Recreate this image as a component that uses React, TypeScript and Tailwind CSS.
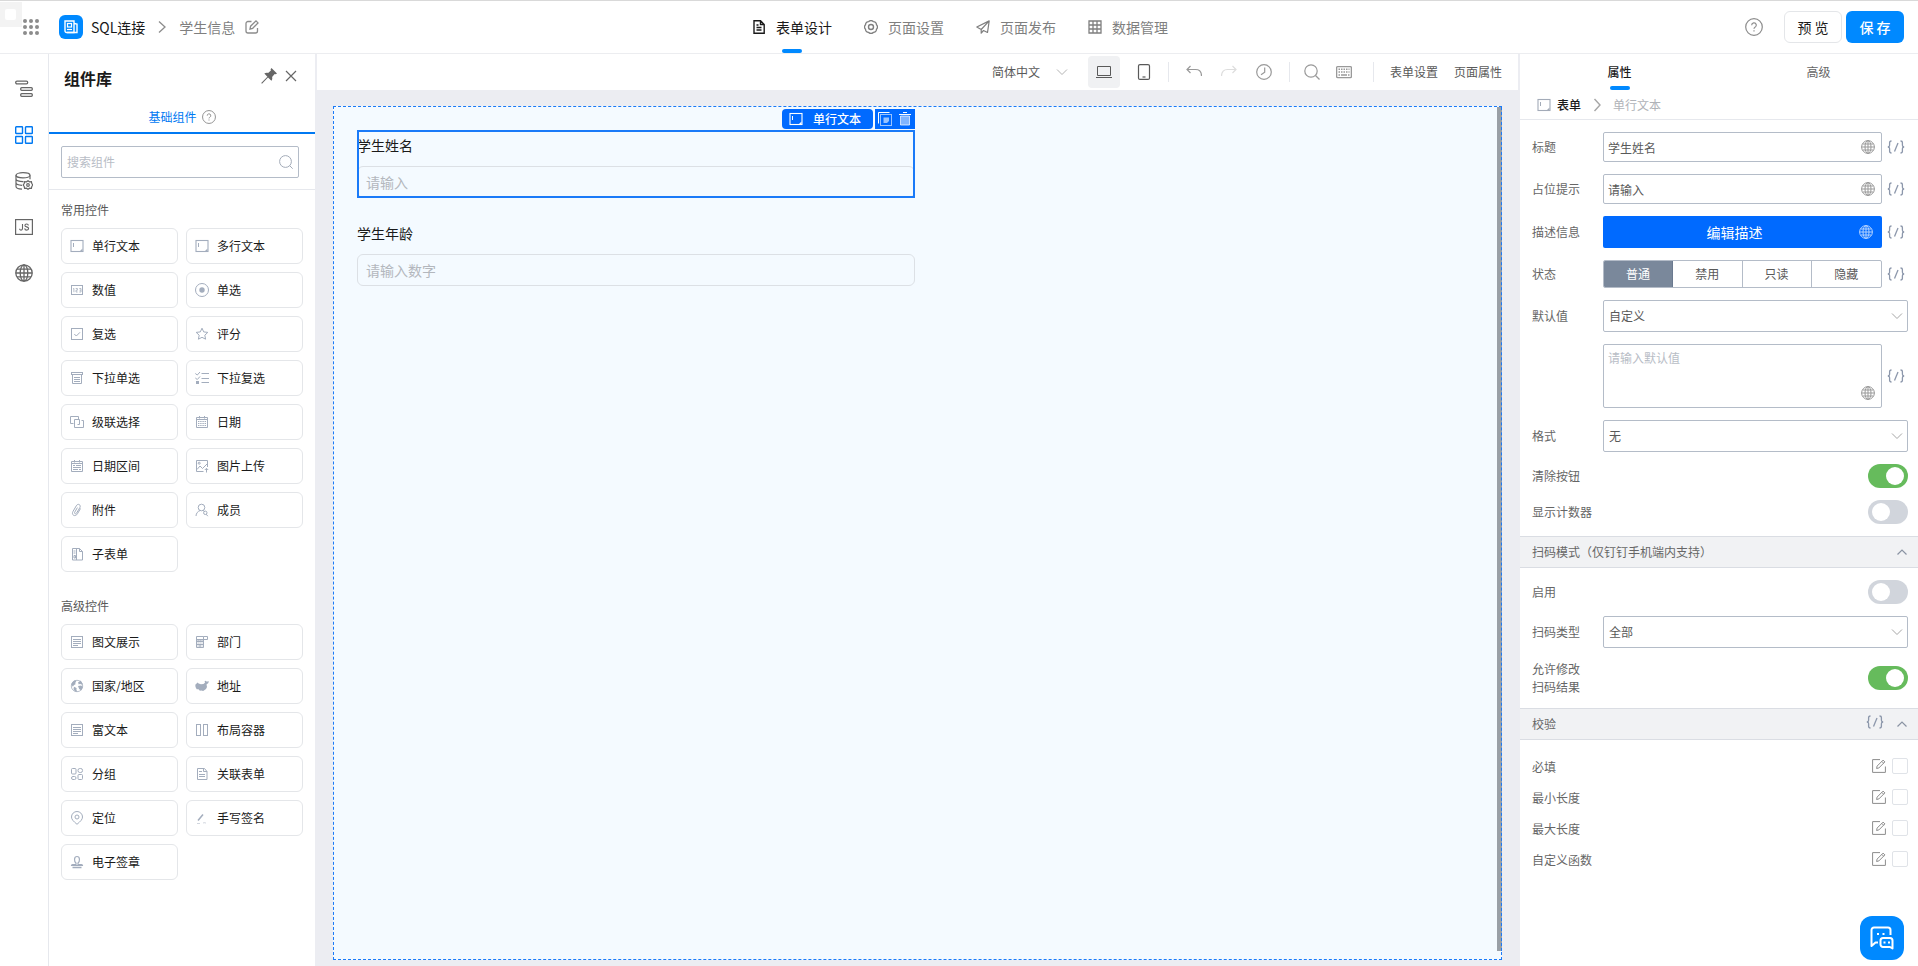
import { useState } from 'react';
import type { ReactNode } from 'react';

interface IconProps {
  size?: number;
  className?: string;
  children: ReactNode;
}

function Icon({ size = 14, className, children }: IconProps) {
  return (
    <svg
      width={size}
      height={size}
      viewBox={`0 0 ${size} ${size}`}
      fill="none"
      stroke="currentColor"
      strokeWidth="1"
      aria-hidden="true"
      className={`shrink-0 ${className ?? ''}`}
    >
      {children}
    </svg>
  );
}

const GlobeIcon = ({ className }: { className?: string }) => (
  <Icon className={className}>
    <circle cx="7" cy="7" r="6.4" />
    <ellipse cx="7" cy="7" rx="3" ry="6.4" />
    <path d="M7 .6v12.8M.6 7h12.8M1.6 4h10.8M1.6 10h10.8" />
  </Icon>
);

const ChevronDown = ({ className }: { className?: string }) => (
  <Icon size={12} className={className}>
    <path d="M1 3.5l5 5 5-5" />
  </Icon>
);

const ChevronUp = () => (
  <Icon size={12} className="text-[#8a93a3]">
    <path d="M1.5 8.5L6 4l4.5 4.5" strokeWidth="1.2" />
  </Icon>
);

const BracesIcon = () => (
  <svg width="18" height="14" viewBox="0 0 18 14" fill="none" stroke="currentColor" strokeWidth="1.3" aria-hidden="true">
    <path d="M4.5 1C3 1 2.6 1.6 2.6 2.8v2.4C2.6 6.4 2.2 7 .8 7c1.4 0 1.8.6 1.8 1.8v2.4c0 1.2.4 1.8 1.9 1.8" />
    <path d="M11 3L7.5 11.500" />
    <path d="M13.5 1c1.5 0 1.9.6 1.9 1.8v2.4c0 1.2.4 1.8 1.8 1.8-1.4 0-1.8.6-1.8 1.8v2.4c0 1.2-.4 1.8-1.9 1.8" />
  </svg>
);

const TextBoxIcon = ({ className }: { className?: string }) => (
  <Icon className={className}>
    <rect x="1" y="1.5" width="12" height="11" strokeWidth="1.1" />
    <path d="M3.5 4v4" />
    <path d="M12.500 9.500v2.500H10z" fill="currentColor" stroke="none" />
  </Icon>
);

const HelpIcon = ({ size = 14, className }: { size?: number; className?: string }) => (
  <svg
    width={size}
    height={size}
    viewBox="0 0 18 18"
    fill="none"
    stroke="currentColor"
    strokeWidth="1.2"
    aria-hidden="true"
    className={className}
  >
    <circle cx="9" cy="9" r="8.3" />
    <path d="M6.7 7.3a2.3 2.3 0 1 1 3.3 2c-.7.4-1 .8-1 1.5M9 12.2v1.3" />
  </svg>
);

const EditSquareIcon = () => (
  <Icon className="text-[#8c8c8c]">
    <path d="M8 .6H.6v12.8h12.8V7.5" />
    <path d="M4.6 9.5l.5-2.4 6-6 1.8 1.8-6 6zM9.8 2.4l1.8 1.8" />
  </Icon>
);

const ArticleIcon = () => (
  <Icon>
    <rect x="1.5" y="1.5" width="11" height="11" />
    <path d="M3 4.5h8M3 6.5h8M3 8.5h8M3 10.5h5" />
  </Icon>
);

interface PaletteItem {
  label: string;
  icon: ReactNode;
}

const commonItems: PaletteItem[] = [
  { label: '单行文本', icon: <TextBoxIcon /> },
  { label: '多行文本', icon: <TextBoxIcon /> },
  {
    label: '数值',
    icon: (
      <Icon>
        <rect x="1.5" y="2.5" width="11" height="9" />
        <path
          d="M3 6l.9-.6v3.8M5.700 5.500h1.700v1.700H6v1.800h1.600M9.300 5.500h1.700v3.500H9.300M9.600 7.200h1.400"
          strokeWidth=".8"
        />
      </Icon>
    ),
  },
  {
    label: '单选',
    icon: (
      <Icon>
        <circle cx="7" cy="7" r="6.5" />
        <circle cx="7" cy="7" r="2.7" fill="currentColor" stroke="none" />
      </Icon>
    ),
  },
  {
    label: '复选',
    icon: (
      <Icon>
        <rect x="1.5" y="1.5" width="11" height="11" />
        <path d="M4.3 7l2 2L10 5.3" />
      </Icon>
    ),
  },
  {
    label: '评分',
    icon: (
      <Icon>
        <path d="M7 1.2l1.7 3.7 4.1.5-3 2.800.8 4L7 10.300l-3.600 1.900.8-4-3-2.800 4.100-.5z" strokeLinejoin="round" />
      </Icon>
    ),
  },
  {
    label: '下拉单选',
    icon: (
      <Icon>
        <rect x="1.5" y="1.5" width="11" height="2" />
        <path d="M2.5 3.5v9h9v-9M4 6.500h6M4 8.500h6M4 10.500h6" />
      </Icon>
    ),
  },
  {
    label: '下拉复选',
    icon: (
      <Icon>
        <path d="M.3 2.500l2 1.500 2.700-3M.3 7l2 1.500L5 5.500M6.500 2.500H14M6.500 7.500H14M6.500 11.500H14" />
        <rect x="1" y="10" width="3" height="3" fill="currentColor" stroke="none" />
      </Icon>
    ),
  },
  {
    label: '级联选择',
    icon: (
      <Icon>
        <path d="M3.500 8.500h-3v-7h8v3M7.500 9.500h2v-5h-5v8h9v-7h-2" />
      </Icon>
    ),
  },
  {
    label: '日期',
    icon: (
      <Icon>
        <path d="M1.500 2.500h11v10h-11zM1.500 4.500h11M4.500 1v2.500M9.500 1v2.500" />
        <path d="M3 6.500h8M3 8.500h8M3 10.500h8" strokeWidth="1.2" strokeDasharray="1.4 .8" />
      </Icon>
    ),
  },
  {
    label: '日期区间',
    icon: (
      <Icon>
        <path d="M1.500 2.500h11v10h-11zM1.500 4.500h11M4.500 1v2.500M9.500 1v2.500M3 6.500h2M6 6.500h5M3 8.500h8M3 10.500h5M9 10.500h2" />
      </Icon>
    ),
  },
  {
    label: '图片上传',
    icon: (
      <Icon>
        <path d="M8.500 12.500h-7v-11h11v6.500M2 10.500l3-3.500 2.500 2.500L12 5" />
        <circle cx="4.2" cy="4.2" r="1" />
        <path d="M11.500 13.500v-4M9.800 11l1.700-1.700 1.700 1.700" />
      </Icon>
    ),
  },
  {
    label: '附件',
    icon: (
      <Icon>
        <path d="M10.500 5.500l-3 5.200c-1 1.700-2.600 2.300-3.900 1.600s-1.500-2.300-.6-3.900l3.300-5.600c.7-1.300 2-1.800 3-1.200s1.200 1.900.5 3.100L6.600 10c-.4.700-1 1-1.600.7s-.6-1-.2-1.700l2.600-4.400" />
      </Icon>
    ),
  },
  {
    label: '成员',
    icon: (
      <Icon>
        <circle cx="6.500" cy="4.500" r="3.300" />
        <path d="M1 13c.2-2.700 1.600-4.600 4-5.400M8 7.500l1.500 1M12.800 13.200l-1.600-2" />
        <circle cx="10.300" cy="9.800" r="1.700" />
      </Icon>
    ),
  },
  {
    label: '子表单',
    icon: (
      <Icon>
        <path d="M2.500 1.500h7l3 3v8.500h-10zM6.500 1.500V13M3.500 4h2M3.500 6h2M4 8.500h1.500v2.500H4zM9.500 1.500v3h3" />
      </Icon>
    ),
  },
];

const advancedItems: PaletteItem[] = [
  { label: '图文展示', icon: <ArticleIcon /> },
  {
    label: '部门',
    icon: (
      <Icon>
        <path d="M1.500 1.500h7v11h-7zM1.500 4.500h7M1.500 6.500h7M1.500 9.500h7M5 9.500v3M8.500 1.500h4v3h-4" />
        <path d="M2.500 5.500h5M2.500 8h5M2.500 11h5" strokeDasharray="1.2 .8" />
      </Icon>
    ),
  },
  {
    label: '国家/地区',
    icon: (
      <Icon>
        <circle cx="7" cy="7" r="5.700" strokeWidth=".8" />
        <path
          d="M1.300 5.500c.6-2.200 2-3.700 4-4.200l1 1.500-1.300 1.300.8 1-2 1.200-.9 1.400zM8 3.500l2.800-1.900 2 3.700-1.700.3-1-.8-1.300.6zM8 7l3.200-.5L12.800 8l-1.600 3.500-2-1.500zM4 7.800l2.600 1.200-.2 1.800.9 2-2.500-.5-1.300-2.300z"
          fill="currentColor"
          stroke="none"
        />
      </Icon>
    ),
  },
  {
    label: '地址',
    icon: (
      <Icon>
        <path
          d="M.3 5.800l2.300-2.200 1 .8 2.300.9 2.500-.4L10 3.800l-.4-1.600 1.300-.4.9.900 1.900-.8-.3 2.200-1.900 1.400.5 2.600-1 1.900-2.800 2-2-.6-1.300.3-1.400-1.400-1.800-.1L.5 8z"
          fill="currentColor"
          stroke="none"
        />
      </Icon>
    ),
  },
  { label: '富文本', icon: <ArticleIcon /> },
  {
    label: '布局容器',
    icon: (
      <Icon>
        <rect x="1.5" y="1.5" width="4" height="11" />
        <rect x="8.5" y="1.5" width="4" height="11" />
      </Icon>
    ),
  },
  {
    label: '分组',
    icon: (
      <Icon>
        <rect x="1.5" y="1.5" width="4.500" height="5.500" rx="1" />
        <rect x="1.5" y="9.500" width="4.500" height="3" rx="1.500" />
        <rect x="8" y="7.500" width="4.500" height="5" rx="1" />
        <rect x="8" y="1.500" width="4.500" height="4" rx="1.800" />
      </Icon>
    ),
  },
  {
    label: '关联表单',
    icon: (
      <Icon>
        <path d="M2.500 1.500h7l2.500 3v8H2.500zM8.500 1.500v3H12M4 4.500h3M4 7.500h6M4 9.500h6" />
      </Icon>
    ),
  },
  {
    label: '定位',
    icon: (
      <Icon>
        <path d="M7 13.300C3.500 10.300 1.500 8.500 1.500 6a5.500 5.500 0 0 1 11 0c0 2.500-2 4.300-5.500 7.300z" />
        <circle cx="7" cy="6" r="2" />
      </Icon>
    ),
  },
  {
    label: '手写签名',
    icon: (
      <Icon>
        <path d="M3 9.500l5-6" strokeWidth="1.500" />
        <path d="M2 12.500h3M8 12c1.500-.6 2.500-.2 3 .3" opacity=".5" />
      </Icon>
    ),
  },
  {
    label: '电子签章',
    icon: (
      <Icon>
        <path d="M6 8C4 6.500 3.800 1.500 7 1.500S10 6.500 8 8v1.500h3.500c.6 0 1 .4 1 1H1.500c0-.6.4-1 1-1H6z" strokeWidth="1.2" />
        <path d="M2.500 12.500h9" strokeWidth="1.5" />
      </Icon>
    ),
  },
];

function PaletteSection({ title, items }: { title: string; items: PaletteItem[] }) {
  return (
    <section className="px-3 pt-3 pb-[14px]">
      <h3 className="mb-[10px] text-xs leading-4 text-[#595959]">{title}</h3>
      <div className="grid grid-cols-2 gap-2">
        {items.map((item) => (
          <button
            key={item.label}
            type="button"
            className="flex h-9 items-center gap-2 rounded-md border border-[#e4e6e9] bg-white pl-2 text-xs text-[#1a1a1a]"
          >
            <span className="text-[#a3adbd]">{item.icon}</span>
            {item.label}
          </button>
        ))}
      </div>
    </section>
  );
}

const navItems = [
  {
    label: '表单设计',
    icon: (
      <Icon>
        <path d="M2 .8h6.500l3.700 3.700v8.700H2zM8.500 1v3.500H12M4.500 5h2M4.500 7.500h5M4.500 10h5" strokeWidth="1.4" />
      </Icon>
    ),
  },
  {
    label: '页面设置',
    icon: (
      <Icon>
        <path
          d="M12.450 9.260A3 3 0 0 1 9.260 12.450A3 3 0 0 1 4.740 12.450A3 3 0 0 1 1.550 9.260A3 3 0 0 1 1.550 4.740A3 3 0 0 1 4.740 1.550A3 3 0 0 1 9.260 1.550A3 3 0 0 1 12.450 4.740A3 3 0 0 1 12.450 9.260z"
          strokeWidth="1.3"
        />
        <circle cx="7" cy="7" r="2.500" strokeWidth="1.4" />
      </Icon>
    ),
  },
  {
    label: '页面发布',
    icon: (
      <Icon>
        <path d="M.8 7L13.200.9l-1.700 11.600-4-2-2.300 2.700V9.500zM5.200 9.500l8-8.600" strokeWidth="1.2" strokeLinejoin="round" />
      </Icon>
    ),
  },
  {
    label: '数据管理',
    icon: (
      <Icon>
        <path d="M1 1h12v12H1zM5 1v12M9 1v12M1 5h12M1 9h12" strokeWidth="1.3" />
      </Icon>
    ),
  },
];

function Header() {
  return (
    <header className="grid h-[54px] shrink-0 grid-cols-[1fr_auto_1fr] items-stretch border-t border-b border-t-[#d9d9d9] border-b-[#ecedf0] bg-white">
      <div className="relative flex items-center pl-[23px] text-sm">
        <span className="absolute top-px left-0 flex h-[25px] w-[22px] items-center bg-[#f3f3f3] pl-[5px]">
          <span className="h-[11px] w-[11px] rounded-xs bg-white" />
        </span>
        <button type="button" aria-label="应用" className="relative mr-5 text-[#8c8c8c]">
          <svg width="16" height="16" viewBox="0 0 16 16" fill="currentColor" aria-hidden="true">
            {[2, 8, 14].map((cy) => [2, 8, 14].map((cx) => <circle key={`${cx}-${cy}`} cx={cx} cy={cy} r="2" />))}
          </svg>
        </button>
        <span className="flex h-6 w-6 items-center justify-center rounded-md bg-[#0089ff] text-white">
          <Icon>
            <path d="M1 1h9v11.500H2.500A1.500 1.500 0 0 1 1 11z" strokeWidth="1.4" />
            <path d="M10 3.500l3 .5v8.500H3" strokeWidth="1.4" />
            <rect x="3.500" y="3.500" width="4" height="3.500" strokeWidth="1.2" />
            <path d="M3 9.500h5" strokeWidth="1.2" />
          </Icon>
        </span>
        <a href="#app" className="ml-2 text-[#1a1a1a]">
          SQL连接
        </a>
        <Icon className="mx-[10px] text-[#8c8c8c]">
          <path d="M4 1.500l6 5.500-6 5.500" strokeWidth="1.3" />
        </Icon>
        <span className="text-[#7f7f7f]">学生信息</span>
        <button type="button" aria-label="重命名" className="ml-[10px] text-[#8c8c8c]">
          <Icon>
            <path d="M6.500 1.500H3a2 2 0 0 0-2 2V11a2 2 0 0 0 2 2h7.500a2 2 0 0 0 2-2V8" strokeWidth="1.3" />
            <path d="M5 9l.6-2.800L11 .9l2 2-5.300 5.400z" strokeWidth="1.3" />
          </Icon>
        </button>
      </div>

      <nav className="flex pl-[2px]">
        {navItems.map((item, i) => (
          <a
            key={item.label}
            href={`#nav-${i}`}
            className={`relative flex items-center gap-[10px] px-4 text-sm ${i === 0 ? 'text-[#1a1a1a]' : 'text-[#7f7f7f]'}`}
          >
            {item.icon}
            {item.label}
            {i === 0 && <span className="absolute bottom-0 left-1/2 h-1 w-5 -translate-x-1/2 rounded-sm bg-[#0089ff]" />}
          </a>
        ))}
      </nav>

      <div className="flex items-center justify-end gap-1 pr-[14px]">
        <button type="button" aria-label="帮助" className="mr-[17px] text-[#8c8c8c]">
          <HelpIcon size={18} />
        </button>
        <button type="button" className="h-8 w-[58px] rounded-md border border-[#e4e6e9] bg-white text-sm text-[#1a1a1a]">
          预 览
        </button>
        <button type="button" className="h-8 w-[58px] rounded-md bg-[#0089ff] text-sm font-medium text-white">
          保 存
        </button>
      </div>
    </header>
  );
}

const railItems = [
  {
    label: '大纲',
    icon: (
      <Icon size={18}>
        <g strokeWidth="1.3">
          <rect x=".7" y="1.200" width="12" height="2.600" rx="1.300" />
          <rect x="5.700" y="7.700" width="11.600" height="2.600" rx="1" />
          <rect x="5.700" y="13.700" width="11.600" height="2.600" rx="1" />
        </g>
      </Icon>
    ),
  },
  {
    label: '组件库',
    icon: (
      <Icon size={18}>
        <g strokeWidth="1.4">
          <rect x=".7" y=".7" width="6.800" height="6.800" rx=".6" />
          <rect x="10.500" y=".7" width="6.800" height="6.800" rx=".6" />
          <rect x=".7" y="10.500" width="6.800" height="6.800" rx=".6" />
          <rect x="10.500" y="10.500" width="6.800" height="6.800" rx=".6" />
        </g>
      </Icon>
    ),
  },
  {
    label: '数据源',
    icon: (
      <Icon size={18}>
        <g strokeWidth="1.2">
          <ellipse cx="8" cy="3.300" rx="7" ry="2.600" />
          <path d="M1 3.300v11.200c0 1.400 2.500 2.500 6 2.700M15 3.300v4M1 7c0 1.600 3 2.700 7.500 2.600M1 10.800c0 1.400 2.500 2.400 6 2.500" />
          <path d="M13 8.700l1.500 1.100 1.900-.2.4 1.900 1 1.500-1 1.500-.4 1.900-1.900-.2-1.500 1.100-1.500-1.100-1.900.2-.4-1.900-1-1.500 1-1.500.4-1.900 1.900.2z" />
          <circle cx="13" cy="13" r="1.300" />
        </g>
      </Icon>
    ),
  },
  {
    label: '动作面板',
    icon: (
      <Icon size={18}>
        <rect x=".6" y="1.600" width="16.800" height="14.800" strokeWidth="1.2" />
        <path
          d="M7.500 6v4.600c0 1-.5 1.500-1.400 1.500s-1.500-.6-1.500-1.400M13.400 7.500c-.1-1-.8-1.500-1.800-1.500s-1.700.5-1.700 1.400c0 2 3.700 1 3.700 3.100 0 1-.8 1.600-1.900 1.600s-1.900-.6-2-1.700"
          strokeWidth="1.1"
        />
      </Icon>
    ),
  },
  {
    label: '多语言',
    icon: (
      <Icon size={18}>
        <g strokeWidth="1.3">
          <circle cx="9" cy="9" r="8.200" />
          <ellipse cx="9" cy="9" rx="3.800" ry="8.200" />
          <path d="M9 .8v16.400M.8 9h16.400M2 5.200h14M2 12.800h14" />
        </g>
      </Icon>
    ),
  },
];

function Rail() {
  return (
    <aside className="flex w-[49px] shrink-0 flex-col items-center gap-7 border-r border-[#e6e8ed] pt-[26px]">
      {railItems.map((item, i) => (
        <button
          key={item.label}
          type="button"
          aria-label={item.label}
          className={i === 1 ? 'text-[#0079f2]' : 'text-[#666666]'}
        >
          {item.icon}
        </button>
      ))}
    </aside>
  );
}

function Palette() {
  return (
    <aside className="w-[266px] shrink-0 bg-white">
      <div className="flex h-12 items-center gap-2 pr-[18px] pl-[15px]">
        <h2 className="flex-1 text-base font-bold text-[#1a1a1a]">组件库</h2>
        <div className="flex items-center gap-2 pb-1 text-[#666666]">
          <button type="button" aria-label="固定">
            <svg width="16" height="16" viewBox="0 0 16 16" fill="currentColor" aria-hidden="true">
              <path d="M10.500 0L16 5.500l-1.300.8-1-.2-2.600 2.800c.4 1.400.2 2.700-.7 3.800L7 9.400 1 15.800l-.8-.7L6.400 8.800 3.300 5.600c1.200-.8 2.500-1 3.800-.6l2.800-2.600-.3-1.200z" />
            </svg>
          </button>
          <button type="button" aria-label="关闭">
            <Icon size={12}>
              <path d="M1 1l10 10M11 1L1 11" strokeWidth="1.2" />
            </Icon>
          </button>
        </div>
      </div>
      <div className="flex h-8 items-center justify-center gap-[5px] border-b-2 border-[#0079f2] text-xs text-[#0079f2]">
        基础组件
        <HelpIcon className="text-[#8c8c8c]" />
      </div>
      <div className="border-b border-[#e6e8ed] pt-3 pr-4 pb-[11px] pl-3">
        <label className="flex h-8 items-center rounded-xs border border-[#b4bcc8] px-[5px]">
          <input
            type="text"
            aria-label="搜索组件"
            placeholder="搜索组件"
            className="min-w-0 flex-1 text-xs outline-none placeholder:text-[#b8bdc6]"
          />
          <Icon className="text-[#a3abb8]">
            <circle cx="6.500" cy="6.500" r="5.900" />
            <path d="M10.700 10.700l3 3" />
          </Icon>
        </label>
      </div>
      <PaletteSection title="常用控件" items={commonItems} />
      <PaletteSection title="高级控件" items={advancedItems} />
    </aside>
  );
}

function Toolbar() {
  return (
    <div className="mx-[2px] flex h-9 items-center justify-end bg-white pr-4 text-xs text-[#595959]">
      <div className="relative mr-5 w-[76px]">
        <select aria-label="语言" className="w-full appearance-none pr-5 outline-none">
          <option>简体中文</option>
        </select>
        <ChevronDown className="pointer-events-none absolute top-1/2 right-0 -translate-y-1/2 text-[#b3b3b3]" />
      </div>
      <button type="button" aria-label="电脑" className="flex h-8 w-8 items-center justify-center rounded-sm bg-[#f0f1f3]">
        <Icon size={16}>
          <path d="M1.500 2.500h13v9h-13zM0 13.500h16" />
        </Icon>
      </button>
      <button type="button" aria-label="手机" className="mx-4">
        <Icon size={16}>
          <rect x="2.500" y=".6" width="11" height="14.800" rx="1.500" strokeWidth="1.2" />
          <path d="M6.500 13h3" strokeWidth="1.2" />
        </Icon>
      </button>
      <div className="flex items-center gap-[19px] border-x border-[#e6e8ed] px-[17px] py-[2px] text-[#999999]">
        <button type="button" aria-label="撤销">
          <Icon size={16}>
            <path d="M4.500 2L1 5.500 4.500 9M1 5.500h8.500c3.500 0 6 2 6 6.500" strokeWidth="1.2" />
          </Icon>
        </button>
        <button type="button" aria-label="重做" className="text-[#dddddd]">
          <Icon size={16}>
            <path d="M11.500 2L15 5.500 11.500 9M15 5.500H6.500C3 5.500.5 7.500.5 12" strokeWidth="1.2" />
          </Icon>
        </button>
        <button type="button" aria-label="历史">
          <Icon size={16}>
            <circle cx="8" cy="8" r="7.300" strokeWidth="1.2" />
            <path d="M8.700 3.500v4.700L5 10.800" strokeWidth="1.2" />
          </Icon>
        </button>
      </div>
      <div className="flex items-center gap-4 border-r border-[#e6e8ed] py-[2px] pr-[21px] pl-[14px] text-[#999999]">
        <button type="button" aria-label="搜索">
          <Icon size={16}>
            <circle cx="7" cy="7" r="6.200" strokeWidth="1.2" />
            <path d="M11.500 11.500l4 4" strokeWidth="1.2" />
          </Icon>
        </button>
        <button type="button" aria-label="快捷键">
          <Icon size={16}>
            <rect x=".6" y="2.600" width="14.800" height="11" rx="1" strokeWidth="1.4" />
            <path d="M2.500 5.300h11M2.500 8h11" strokeWidth="1.5" strokeDasharray="1.5 1" />
            <path d="M2.500 11H4M5 11h6M12 11h1.500" strokeWidth="1.3" />
          </Icon>
        </button>
      </div>
      <button type="button" className="ml-4">
        表单设置
      </button>
      <button type="button" className="ml-4">
        页面属性
      </button>
    </div>
  );
}

interface CanvasFieldProps {
  id: string;
  label: string;
  placeholder: string;
  selected?: boolean;
}

function CanvasField({ id, label, placeholder, selected }: CanvasFieldProps) {
  return (
    <div className="relative">
      <label htmlFor={id} className="mb-[6px] block text-sm leading-[30px] text-[#1a1a1a]">
        {label}
      </label>
      <input
        id={id}
        type="text"
        placeholder={placeholder}
        className="block h-8 w-full rounded-md border border-[#dce0e5] px-2 text-sm outline-none placeholder:text-[#b3b7bd]"
      />
      {selected && (
        <>
          <div className="pointer-events-none absolute inset-0 border-2 border-[#1a7af8]" />
          <div className="absolute right-0 bottom-full mb-px flex h-5 gap-[2px] text-white">
            <span className="flex items-center gap-[10px] rounded-sm bg-[#006aff] pr-3 pl-[7px] text-xs font-medium">
              <TextBoxIcon />
              单行文本
            </span>
            <span className="flex items-center gap-[6px] bg-[#006aff] px-[3px]">
              <button type="button" aria-label="复制">
                <Icon>
                  <path d="M.5 11.500V.5h11" />
                  <rect x="2.500" y="2.500" width="11" height="11" opacity=".6" />
                  <path d="M5.500 5.500H11V9l-2 2H5.500z" fill="currentColor" stroke="none" opacity=".6" />
                </Icon>
              </button>
              <button type="button" aria-label="删除">
                <Icon>
                  <path d="M1 2.500h12M5 .5h4" />
                  <path d="M2.500 4h9v9h-9z" fill="currentColor" fillOpacity=".5" strokeOpacity=".7" />
                </Icon>
              </button>
            </span>
          </div>
        </>
      )}
    </div>
  );
}

function Canvas() {
  return (
    <main className="flex min-w-0 flex-1 flex-col bg-[#ecedf2]">
      <Toolbar />
      <div className="relative mx-[18px] mt-4 mb-[6px] flex-1 border border-dashed border-[#1a7af8] bg-[#f4faff] pt-[23px] pr-7 pl-[23px]">
        <div className="grid grid-cols-2">
          <div className="flex flex-col gap-5">
            <CanvasField id="studentName" label="学生姓名" placeholder="请输入" selected />
            <CanvasField id="studentAge" label="学生年龄" placeholder="请输入数字" />
          </div>
        </div>
        <div className="absolute top-0 -right-px bottom-2 w-[5px] border-r border-dashed border-[#1a7af8] bg-[#999fa6]" />
      </div>
    </main>
  );
}

const fieldBox = 'w-full rounded-xs border border-[#b4bcc8] bg-white text-xs text-[#595959] outline-none';

interface RowProps {
  label?: string;
  htmlFor?: string;
  binding?: boolean;
  children: ReactNode;
}

function Row({ label, htmlFor, binding, children }: RowProps) {
  return (
    <div className="flex items-center">
      <label htmlFor={htmlFor} className="w-[71px] shrink-0 text-xs text-[#666666]">
        {label}
      </label>
      <div className="relative min-w-0 flex-1">{children}</div>
      {binding && (
        <button type="button" aria-label="绑定变量" className="mr-[3px] ml-[5px] text-[#8c97ab]">
          <BracesIcon />
        </button>
      )}
    </div>
  );
}

function SelectRow({ id, label, value }: { id: string; label: string; value: string }) {
  return (
    <Row label={label} htmlFor={id}>
      <select id={id} className={`${fieldBox} block h-8 appearance-none px-[5px]`}>
        <option>{value}</option>
      </select>
      <ChevronDown className="pointer-events-none absolute top-1/2 right-[5px] -translate-y-1/2 text-[#a6a6a6]" />
    </Row>
  );
}

function SwitchRow({ id, label, on = false }: { id: string; label: string; on?: boolean }) {
  return (
    <div className="flex items-center justify-between">
      <label htmlFor={id} className="text-xs leading-[18px] whitespace-pre-line text-[#666666]">
        {label}
      </label>
      <input
        id={id}
        type="checkbox"
        role="switch"
        defaultChecked={on}
        className="h-6 w-10 appearance-none rounded-full bg-[#d1d5dc] p-[3px] pl-1 before:block before:h-[18px] before:w-[18px] before:rounded-full before:bg-white checked:bg-[#66bb5c] checked:before:translate-x-[14px]"
      />
    </div>
  );
}

function SectionHeader({ title, binding }: { title: string; binding?: boolean }) {
  return (
    <div className="flex h-8 items-center gap-3 border-y border-[#dadde3] bg-[#f1f2f4] pr-[10px] pl-3 text-xs text-[#666666]">
      <h3 className="flex-1">{title}</h3>
      {binding && (
        <button type="button" aria-label="绑定变量" className="pb-1 text-[#8c97ab]">
          <BracesIcon />
        </button>
      )}
      <button type="button" aria-label="收起">
        <ChevronUp />
      </button>
    </div>
  );
}

const states = ['普通', '禁用', '只读', '隐藏'];
const rules = ['必填', '最小长度', '最大长度', '自定义函数'];

function Properties() {
  const [state, setState] = useState('普通');

  return (
    <aside className="w-[398px] shrink-0 bg-white">
      <div className="grid h-9 grid-cols-2 text-xs">
        <button type="button" className="relative font-medium text-[#1a1a1a]">
          属性
          <span className="absolute bottom-0 left-1/2 h-1 w-5 -translate-x-1/2 rounded-sm bg-[#0089ff]" />
        </button>
        <button type="button" className="text-[#666666]">
          高级
        </button>
      </div>
      <div className="flex h-[30px] items-center border-b border-[#e6e8ed] pl-[17px] text-xs">
        <TextBoxIcon className="mr-[6px] text-[#a3abb8]" />
        <span className="font-medium text-[#1a1a1a]">表单</span>
        <Icon className="mx-[9px] text-[#a6a6a6]">
          <path d="M4.500 1l5.500 6-5.500 6" strokeWidth="1.4" />
        </Icon>
        <span className="text-[#b0b3b8]">单行文本</span>
      </div>

      <div className="flex flex-col gap-3 py-3 pr-[10px] pl-3">
        <Row label="标题" htmlFor="propLabel" binding>
          <input id="propLabel" type="text" defaultValue="学生姓名" className={`${fieldBox} block h-[30px] px-1`} />
          <GlobeIcon className="absolute top-2 right-[7px] text-[#999999]" />
        </Row>
        <Row label="占位提示" htmlFor="propPlaceholder" binding>
          <input id="propPlaceholder" type="text" defaultValue="请输入" className={`${fieldBox} block h-[30px] px-1`} />
          <GlobeIcon className="absolute top-2 right-[7px] text-[#999999]" />
        </Row>
        <Row label="描述信息" htmlFor="propTips" binding>
          <button id="propTips" type="button" className="block h-8 w-full rounded-xs bg-[#006aff] pr-4 text-sm text-white">
            编辑描述
          </button>
          <GlobeIcon className="absolute top-[9px] right-[9px] text-[#b3d2ff]" />
        </Row>
        <Row label="状态" binding>
          <div role="radiogroup" aria-label="状态" className="grid h-7 grid-cols-4 overflow-hidden rounded-xs border border-[#b4bcc8]">
            {states.map((s) => (
              <label
                key={s}
                className="flex cursor-pointer items-center justify-center border-r border-[#b4bcc8] text-xs text-[#595959] last:border-r-0 has-checked:border-[#6b7a90] has-checked:bg-[#7a889b] has-checked:text-white"
              >
                <input
                  type="radio"
                  name="state"
                  value={s}
                  checked={state === s}
                  onChange={() => setState(s)}
                  className="sr-only"
                />
                {s}
              </label>
            ))}
          </div>
        </Row>
        <SelectRow id="propDefault" label="默认值" value="自定义" />
        <Row binding>
          <textarea
            aria-label="默认值内容"
            placeholder="请输入默认值"
            className={`${fieldBox} block h-16 resize-none px-1 py-[5px] placeholder:text-[#b8bdc6]`}
          />
          <GlobeIcon className="absolute right-[7px] bottom-2 text-[#999999]" />
        </Row>
        <SelectRow id="propFormat" label="格式" value="无" />
        <SwitchRow id="propClear" label="清除按钮" on />
        <SwitchRow id="propCounter" label="显示计数器" />
      </div>

      <SectionHeader title="扫码模式（仅钉钉手机端内支持）" />
      <div className="flex flex-col gap-3 py-3 pr-[10px] pl-3">
        <SwitchRow id="scanEnable" label="启用" />
        <SelectRow id="scanType" label="扫码类型" value="全部" />
        <SwitchRow id="scanEdit" label={'允许修改\n扫码结果'} on />
      </div>

      <SectionHeader title="校验" binding />
      <div className="flex flex-col gap-[15px] py-[18px] pr-[10px] pl-3">
        {rules.map((rule, i) => (
          <div key={rule} className="flex h-4 items-center gap-[6px]">
            <label htmlFor={`rule-${i}`} className="flex-1 pt-[2px] text-xs text-[#666666]">
              {rule}
            </label>
            <button type="button" aria-label="编辑">
              <EditSquareIcon />
            </button>
            <input
              id={`rule-${i}`}
              type="checkbox"
              className="h-4 w-4 appearance-none rounded-xs border border-[#e0e3e8] bg-white checked:bg-[#0089ff]"
            />
          </div>
        ))}
      </div>
    </aside>
  );
}

export default function App() {
  return (
    <div className="flex h-screen flex-col overflow-hidden bg-white font-['Noto_Sans_CJK_SC',sans-serif]">
      <Header />
      <div className="flex min-h-0 flex-1">
        <Rail />
        <Palette />
        <Canvas />
        <Properties />
      </div>
      <button
        type="button"
        aria-label="在线客服"
        className="fixed right-[14px] bottom-[6px] flex h-11 w-11 items-center justify-center rounded-xl bg-[#0089ff] text-white"
      >
        <svg
          width="24"
          height="24"
          viewBox="0 0 24 24"
          fill="none"
          stroke="currentColor"
          strokeWidth="2"
          strokeLinejoin="round"
          aria-hidden="true"
        >
          <path d="M8 16.500H5.500L1.500 20V4A2.500 2.500 0 0 1 4 1.500h14A2.500 2.500 0 0 1 20.500 4v5" />
          <path d="M13 12h7a2.500 2.500 0 0 1 2.500 2.500v8L20 21h-7a2.500 2.500 0 0 1-2.500-2.500v-4A2.500 2.500 0 0 1 13 12z" />
          <path d="M7 8h2M12.500 8h2M13.500 16.500h2M18 16.500h2" />
        </svg>
      </button>
    </div>
  );
}
